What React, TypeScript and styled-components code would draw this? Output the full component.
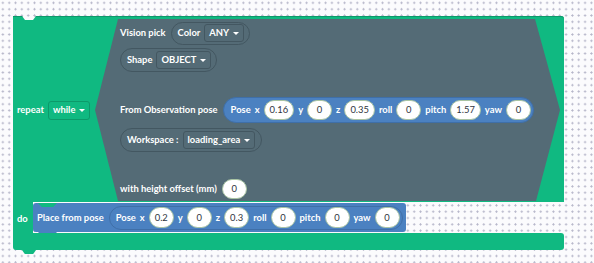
import React from 'react';
import styled, { createGlobalStyle } from 'styled-components';

const GREEN = '#10b981';
const GREEN_DARK = '#0c9a6a';
const SLATE = '#546b76';
const SLATE_DARK = '#435761';
const BLUE = '#4b81c1';
const BLUE_DARK = '#3f6fa8';
const FONT = 9.4;

const Global = createGlobalStyle`
  html, body { margin: 0; padding: 0; }
  body {
    width: 594px;
    height: 263px;
    overflow: hidden;
    background-color: #fbfbfd;
    background-image: radial-gradient(circle, #b4b4c8 0.8px, transparent 1.3px);
    background-size: 6.33px 6.33px;
    background-position: -0.3px -0.3px;
    font-family: Lato, "Open Sans", sans-serif;
    -webkit-font-smoothing: antialiased;
  }
`;

const Workspace = styled.div`
  padding: 16px 0 0 13px;
`;

const RepeatBlock = styled.div`
  position: relative;
  width: 551px;
  display: flex;
  flex-direction: column;
`;

const Head = styled.div`
  height: 186px;
  box-sizing: border-box;
  padding: 3px 0 1px 4px;
  background: ${GREEN};
  box-shadow: inset 0 1px 0 ${GREEN_DARK};
  display: flex;
  align-items: center;
  border-top-right-radius: 3px;
  clip-path: polygon(0 0, 9px 0, 12px 4px, 20px 4px, 23px 0, 100% 0, 100% 100%, 0 100%);
`;

const HeadLabel = styled.div`
  width: 78px;
  flex-shrink: 0;
  display: flex;
  align-items: center;
  gap: 4px;
`;

const Label = styled.span`
  color: #fff;
  font-weight: 700;
  font-size: ${FONT}px;
  white-space: nowrap;
  line-height: 1;
`;

const Arrow = styled.span`
  width: 0;
  height: 0;
  border-left: 3px solid transparent;
  border-right: 3px solid transparent;
  border-top: 3.5px solid #fff;
`;

const Dropdown = styled.div<{ $border: string; $h?: number }>`
  display: inline-flex;
  align-items: center;
  gap: 4px;
  height: ${(p) => p.$h ?? 18}px;
  box-sizing: border-box;
  padding: 0 4px 0 4px;
  border: 1px solid ${(p) => p.$border};
  border-radius: 3px;
`;

const Hexagon = styled.div`
  width: 465px;
  height: 182px;
  flex-shrink: 0;
  box-sizing: border-box;
  padding: 3px 0 2px 25px;
  background: ${SLATE};
  clip-path: polygon(23px 0, calc(100% - 25px) 0, 100% 50%, calc(100% - 24px) 100%, 23px 100%, 0 50%);
  display: flex;
  flex-direction: column;
  align-items: flex-start;
`;

const Row = styled.div<{ $top: number; $h: number }>`
  display: flex;
  align-items: center;
  gap: 5px;
  margin-top: ${(p) => p.$top}px;
  height: ${(p) => p.$h}px;
`;

const Group = styled.div<{ $h: number; $pr?: number; $border: string }>`
  display: inline-flex;
  align-items: center;
  gap: 4px;
  height: ${(p) => p.$h}px;
  box-sizing: border-box;
  padding: 0 ${(p) => p.$pr ?? 5}px 0 6px;
  border: 1px solid ${(p) => p.$border};
  border-radius: ${(p) => p.$h / 2}px;
`;

const PoseReporter = styled.div`
  display: inline-flex;
  align-items: center;
  gap: 4px;
  height: 26px;
  box-sizing: border-box;
  padding: 0 2px 0 7px;
  background: ${BLUE};
  border: 1px solid ${BLUE_DARK};
  border-radius: 13px;
`;

const Field = styled.span<{ $h?: number }>`
  display: inline-flex;
  align-items: center;
  justify-content: center;
  height: ${(p) => p.$h ?? 20}px;
  min-width: 25px;
  box-sizing: border-box;
  padding: 0 5px;
  background: #fff;
  border: 1px solid #a9c4a3;
  border-radius: 11px;
  color: #2e3440;
  font-size: ${FONT}px;
  font-weight: 400;
  line-height: 1;
`;

const DoRow = styled.div`
  display: flex;
  height: 31px;
`;

const DoArm = styled.div`
  width: 20px;
  flex-shrink: 0;
  box-sizing: border-box;
  padding: 4px 0 0 4px;
  background: ${GREEN};
`;

const PlaceBlock = styled.div`
  position: relative;
  margin-top: 1px;
  height: 29px;
  box-sizing: border-box;
  padding: 0 3px 0 4px;
  background: ${BLUE};
  border-radius: 3px;
  display: flex;
  align-items: center;
  gap: 5px;
  &::before {
    content: '';
    position: absolute;
    top: 0;
    left: 5px;
    width: 19px;
    height: 4px;
    background: ${GREEN};
    clip-path: polygon(0 0, 100% 0, 80% 100%, 20% 100%);
  }
  &::after {
    content: '';
    position: absolute;
    top: 100%;
    left: 5px;
    width: 19px;
    height: 4px;
    background: ${BLUE};
    clip-path: polygon(0 0, 100% 0, 80% 100%, 20% 100%);
  }
`;

const Foot = styled.div`
  position: relative;
  height: 17px;
  background: ${GREEN};
  border-radius: 0 3px 3px 3px;
  &::after {
    content: '';
    position: absolute;
    top: 100%;
    left: 9px;
    width: 14px;
    height: 4px;
    background: ${GREEN};
    clip-path: polygon(0 0, 100% 0, 80% 100%, 20% 100%);
  }
`;

type Pose = [string, string][];

const obsPose: Pose = [
  ['x', '0.16'],
  ['y', '0'],
  ['z', '0.35'],
  ['roll', '0'],
  ['pitch', '1.57'],
  ['yaw', '0'],
];

const placePose: Pose = [
  ['x', '0.2'],
  ['y', '0'],
  ['z', '0.3'],
  ['roll', '0'],
  ['pitch', '0'],
  ['yaw', '0'],
];

const PoseItems: React.FC<{ pose: Pose; h: number }> = ({ pose, h }) => (
  <>
    <Label>Pose</Label>
    {pose.map(([k, v]) => (
      <React.Fragment key={k}>
        <Label>{k}</Label>
        <Field $h={h}>{v}</Field>
      </React.Fragment>
    ))}
  </>
);

export default function App() {
  return (
    <>
      <Global />
      <Workspace>
        <RepeatBlock>
          <Head>
            <HeadLabel>
              <Label>repeat</Label>
              <Dropdown $border={GREEN_DARK} $h={19}>
                <Label>while</Label>
                <Arrow />
              </Dropdown>
            </HeadLabel>
            <Hexagon>
              <Row $top={0} $h={22}>
                <Label>Vision pick</Label>
                <Group $h={23} $border={SLATE_DARK}>
                  <Label>Color</Label>
                  <Dropdown $border={SLATE_DARK}>
                    <Label>ANY</Label>
                    <Arrow />
                  </Dropdown>
                </Group>
              </Row>
              <Row $top={4} $h={24}>
                <Group $h={24} $border={SLATE_DARK}>
                  <Label>Shape</Label>
                  <Dropdown $border={SLATE_DARK}>
                    <Label>OBJECT</Label>
                    <Arrow />
                  </Dropdown>
                </Group>
              </Row>
              <Row $top={25} $h={26}>
                <Label>From Observation pose</Label>
                <PoseReporter>
                  <PoseItems pose={obsPose} h={20} />
                </PoseReporter>
              </Row>
              <Row $top={5} $h={24}>
                <Group $h={24} $pr={6} $border={SLATE_DARK}>
                  <Label>Workspace :</Label>
                  <Dropdown $border={SLATE_DARK}>
                    <Label>loading_area</Label>
                    <Arrow />
                  </Dropdown>
                </Group>
              </Row>
              <Row $top={27} $h={20}>
                <Label>with height offset (mm)</Label>
                <Field>0</Field>
              </Row>
            </Hexagon>
          </Head>
          <DoRow>
            <DoArm>
              <Label>do</Label>
            </DoArm>
            <PlaceBlock>
              <Label>Place from pose</Label>
              <Group $h={24} $pr={2} $border={BLUE_DARK}>
                <PoseItems pose={placePose} h={21} />
              </Group>
            </PlaceBlock>
          </DoRow>
          <Foot />
        </RepeatBlock>
      </Workspace>
    </>
  );
}
